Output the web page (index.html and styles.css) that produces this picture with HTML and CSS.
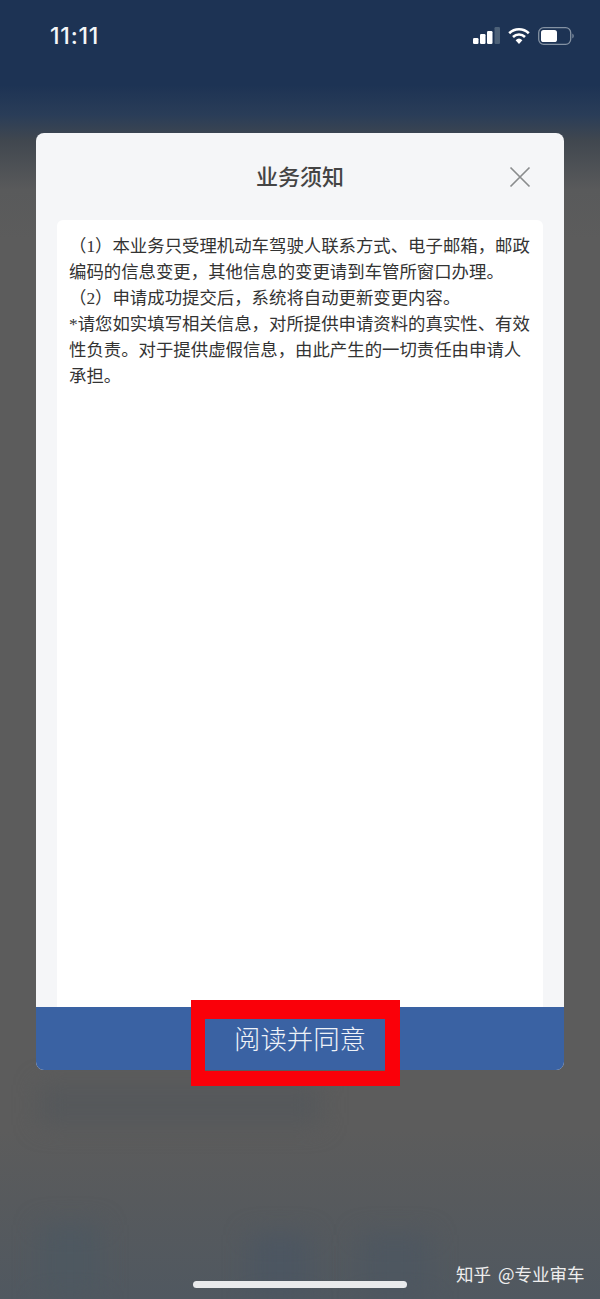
FILE: index.html
```html
<!DOCTYPE html>
<html lang="zh-CN">
<head>
<meta charset="utf-8">
<title>业务须知</title>
<link rel="stylesheet" href="styles.css">
</head>
<body>
<div class="screen">
  <div class="backdrop-patch patch-a"></div>
  <div class="backdrop-patch patch-b"></div>
  <div class="backdrop-patch patch-c"></div>
  <div class="backdrop-patch patch-d"></div>
  <header class="status-bar">
    <span class="time">11:11</span>
    <div class="status-icons">
      <svg class="signal" width="27" height="17" viewBox="0 0 27 17">
        <rect x="0" y="11" width="5.5" height="6" rx="1.2" fill="#fff"/>
        <rect x="7" y="7" width="5.5" height="10" rx="1.2" fill="#fff"/>
        <rect x="14" y="4" width="5.5" height="13" rx="1.2" fill="#fff"/>
        <rect x="21.5" y="0" width="5.5" height="17" rx="1.2" fill="#4d6178"/>
      </svg>
      <svg class="wifi" width="22" height="17" viewBox="0 0 22 17">
        <path d="M1.2 6.2 A14 14 0 0 1 20.8 6.2" fill="none" stroke="#fff" stroke-width="2.6"/>
        <path d="M5 10 A8.6 8.6 0 0 1 17 10" fill="none" stroke="#fff" stroke-width="2.6"/>
        <path d="M11 17 L7.6 13.2 A5 5 0 0 1 14.4 13.2 Z" fill="#fff"/>
      </svg>
      <svg class="battery" width="36" height="18" viewBox="0 0 36 18">
        <rect x="0.7" y="0.7" width="32" height="16.6" rx="5" fill="none" stroke="#8492a3" stroke-width="1.3"/>
        <rect x="3" y="3" width="16" height="12" rx="2.6" fill="#fff"/>
        <path d="M34.4 6.5 A3 3 0 0 1 34.4 11.5 Z" fill="#8492a3"/>
      </svg>
    </div>
  </header>
  <section class="modal">
    <div class="modal-head">
      <h1 class="modal-title">业务须知</h1>
      <svg class="close" width="22" height="22" viewBox="0 0 22 22">
        <path d="M1.5 1.5 L20.5 20.5 M20.5 1.5 L1.5 20.5" stroke="#8a8c8e" stroke-width="1.7" fill="none"/>
      </svg>
    </div>
    <div class="notice">
      <p>（1）本业务只受理机动车驾驶人联系方式、电子邮箱，邮政编码的信息变更，其他信息的变更请到车管所窗口办理。</p>
      <p>（2）申请成功提交后，系统将自动更新变更内容。</p>
      <p>*请您如实填写相关信息，对所提供申请资料的真实性、有效性负责。对于提供虚假信息，由此产生的一切责任由申请人承担。</p>
    </div>
    <div class="modal-foot">阅读并同意</div>
  </section>
  <div class="highlight"></div>
  <div class="home-indicator"></div>
  <div class="watermark">知乎 @专业审车</div>
</div>
</body>
</html>
```
FILE: styles.css
```css
* { box-sizing: border-box; margin: 0; padding: 0; }
html, body { width: 600px; height: 1299px; overflow: hidden; }
body { font-family: "Noto Sans CJK SC", "Noto Sans", sans-serif; }
.screen {
  position: relative;
  width: 600px;
  height: 1299px;
  overflow: hidden;
  display: flex;
  flex-direction: column;
  background: linear-gradient(180deg, #1d3354 0, #1d3354 85px, #2a3d58 115px, #40474f 140px, #595a5b 190px, #5c5c5c 240px, #5c5c5c 1130px, #575a5d 1200px, #505860 1299px);
}
.backdrop-patch { position: absolute; filter: blur(12px); background: #55585b; }
.patch-a { left: 40px; top: 1085px; width: 280px; height: 40px; }
.patch-b { left: 40px; top: 1225px; width: 60px; height: 74px; background: #4e5860; }
.patch-c { left: 250px; top: 1235px; width: 60px; height: 64px; background: #4c5661; }
.patch-d { left: 360px; top: 1235px; width: 70px; height: 64px; background: #4e5760; }
.status-bar {
  position: relative;
  height: 133px;
  flex: none;
  display: flex;
  justify-content: space-between;
  align-items: flex-start;
  padding: 22px 26px 0 50px;
}
.time {
  font-family: Inter, Roboto, sans-serif;
  font-size: 23px;
  line-height: 28px;
  font-weight: 500;
  letter-spacing: 0.8px;
  color: #f4f6f8;
}
.status-icons { display: flex; align-items: flex-start; padding-top: 5px; }
.signal { margin-right: 8px; }
.wifi { margin-right: 8px; }
.modal {
  position: relative;
  width: 528px;
  height: 937px;
  margin-left: 36px;
  flex: none;
  display: flex;
  flex-direction: column;
  background: #f5f6f8;
  border-radius: 8px;
  overflow: hidden;
}
.modal-head {
  position: relative;
  height: 87px;
  flex: none;
  display: flex;
  align-items: center;
  justify-content: center;
  padding-bottom: 4px;
}
.modal-title {
  font-size: 22px;
  line-height: 30px;
  font-weight: 500;
  color: #444;
}
.close { position: absolute; right: 33px; top: 33px; }
.notice {
  flex: 1;
  margin: 0 21px;
  padding: 13px 12px 0 12px;
  background: #fff;
  border-radius: 6px 6px 0 0;
  font-family: "Liberation Serif", "Noto Sans CJK SC", serif;
  font-size: 17.4px;
  line-height: 26px;
  color: #333;
}
.modal-foot {
  height: 63px;
  flex: none;
  display: flex;
  align-items: center;
  justify-content: center;
  padding-bottom: 2px;
  background: #3a62a3;
  color: #eef2f8;
  font-size: 26.4px;
  font-weight: 300;
  line-height: 61px;
}
.highlight {
  position: absolute;
  left: 191px;
  top: 1000px;
  width: 209px;
  height: 86px;
  border: solid #fa0009;
  border-width: 19px 15px 15px 14px;
}
.home-indicator {
  position: absolute;
  left: 193px;
  top: 1281px;
  width: 214px;
  height: 7px;
  border-radius: 4px;
  background: #e9eaec;
}
.watermark {
  position: absolute;
  left: 456px;
  top: 1262px;
  font-size: 17.5px;
  line-height: 24px;
  word-spacing: 3px;
  color: #eeeeee;
  white-space: nowrap;
}
```
